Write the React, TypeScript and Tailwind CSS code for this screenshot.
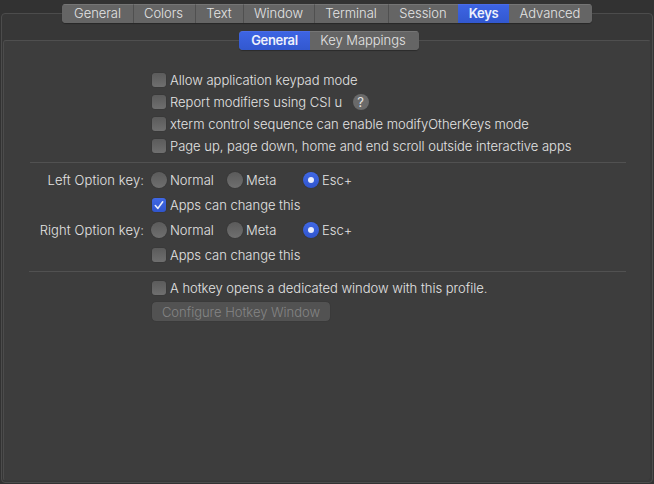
import React from "react";
import { clsx } from "clsx";

type Tab = { label: string; width: string; active?: boolean };

const mainTabs: Tab[] = [
  { label: "General", width: "w-[71px]" },
  { label: "Colors", width: "w-[62px] pr-[2px]" },
  { label: "Text", width: "w-[48px] pr-px" },
  { label: "Window", width: "w-[71px] pr-px" },
  { label: "Terminal", width: "w-[74px] pr-px" },
  { label: "Session", width: "w-[70px] pr-px" },
  { label: "Keys", width: "w-[51px]", active: true },
  { label: "Advanced", width: "w-[83px] pr-px" },
];

const keyTabs: Tab[] = [
  { label: "General", width: "w-[71px]", active: true },
  { label: "Key Mappings", width: "w-[109px] pr-[3px]" },
];

function Segmented({ tabs }: { tabs: Tab[] }) {
  return (
    <div className="flex h-[19px] shrink-0 overflow-hidden rounded-[4px] bg-[#656565] shadow-[0_1px_1px_rgba(0,0,0,0.3)]">
      {tabs.map((tab, i) => (
        <button
          key={tab.label}
          className={clsx(
            "flex h-full shrink-0 items-center justify-center border-t pb-[2px] whitespace-nowrap",
            tab.width,
            tab.active
              ? "border-t-[#4a6ce8] bg-linear-to-b from-[#3d64e3] to-[#3258cf] font-semibold text-[#eef1fc] tracking-[-0.35px]"
              : "border-t-[#757575] bg-[#656565] tracking-[-0.04px]",
            i > 0 && !tab.active && !tabs[i - 1].active && "border-l border-l-[#505050]",
          )}
        >
          {tab.label}
        </button>
      ))}
    </div>
  );
}

function Box({ checked }: { checked?: boolean }) {
  return (
    <span
      className={clsx(
        "flex size-[14px] shrink-0 items-center justify-center rounded-[3px] shadow-[0_0_1px_rgba(0,0,0,0.5)]",
        checked
          ? "bg-linear-to-b from-[#4068e6] to-[#3055cc]"
          : "bg-linear-to-b from-[#5b5b5b] to-[#6f6f6f]",
      )}
    >
      {checked && (
        <svg viewBox="0 0 14 14" className="size-[14px]" fill="none" stroke="#e9eefc" strokeWidth="1.6" strokeLinecap="round" strokeLinejoin="round">
          <path d="M3.3 7.5 5.9 10.4 10.7 3.8" />
        </svg>
      )}
    </span>
  );
}

function Check({ label, checked, children }: { label: string; checked?: boolean; children?: React.ReactNode }) {
  return (
    <div className="ml-[152px] flex h-[22px] items-center">
      <Box checked={checked} />
      <span className="ml-1 whitespace-nowrap">{label}</span>
      {children}
    </div>
  );
}

function Radio({ label, checked }: { label: string; checked?: boolean }) {
  return (
    <div className="flex w-[76px] items-center">
      <span
        className={clsx(
          "flex size-4 shrink-0 items-center justify-center rounded-full shadow-[0_0_1px_rgba(0,0,0,0.5)]",
          checked
            ? "bg-linear-to-b from-[#4068e6] to-[#3055cc]"
            : "bg-linear-to-b from-[#5b5b5b] to-[#6f6f6f]",
        )}
      >
        {checked && <span className="size-[6px] rounded-full bg-[#e9eefc]" />}
      </span>
      <span className="ml-[3px]">{label}</span>
    </div>
  );
}

function OptionKey({ label, checked }: { label: string; checked?: boolean }) {
  return (
    <div className="h-[50px]">
      <div className="flex h-[28px] items-center">
        <span className="w-[144px] pb-px text-right tracking-[0.1px] whitespace-nowrap">{label}</span>
        <div className="ml-[7px] flex">
          <Radio label="Normal" />
          <Radio label="Meta" />
          <Radio label="Esc+" checked />
        </div>
      </div>
      <Check label="Apps can change this" checked={checked} />
    </div>
  );
}

export default function App() {
  return (
    <main className="flex h-[484px] w-[654px] flex-col overflow-hidden bg-[#323232] px-px pt-[13px] pb-px font-['Inter','Liberation_Sans',sans-serif] text-[13px] leading-4 font-[360] tracking-[-0.015px] text-[#e4e4e4]">
      <section className="flex h-[470px] flex-col rounded-[4px] border border-[#4c4c4c] bg-[#373737] px-px pb-px">
        <div className="mt-[-10px] flex pl-[59px]">
          <Segmented tabs={mainTabs} />
        </div>
        <section className="mt-[17px] flex flex-1 flex-col rounded-[3px] border border-t-[#4f4f4f] border-r-[#383838] border-b-[#3a3a3a] border-l-[#4c4c4c] bg-[#3d3d3d]">
          <div className="mt-[-10px] flex pl-[235px]">
            <Segmented tabs={keyTabs} />
          </div>
          <div className="-ml-1 w-[654px] pt-[19px]">
            <Check label="Allow application keypad mode" />
            <Check label="Report modifiers using CSI u">
              <span className="ml-[10.5px] flex size-4 items-center justify-center rounded-full bg-[#6a6a6a] text-[13px] font-normal">?</span>
            </Check>
            <Check label="xterm control sequence can enable modifyOtherKeys mode" />
            <Check label="Page up, page down, home and end scroll outside interactive apps" />
            <hr className="mt-[5px] ml-[30px] w-[596px] border-t border-[#515151]" />
            <div className="pt-[3px]">
              <OptionKey label="Left Option key:" checked />
              <OptionKey label="Right Option key:" />
            </div>
            <hr className="mt-[5px] ml-[29px] w-[597px] border-t border-[#515151]" />
            <div className="pt-[5px]">
              <Check label="A hotkey opens a dedicated window with this profile." />
              <button disabled className="mt-[3px] ml-[152px] flex h-[19px] w-[178px] items-center justify-center rounded-[4px] bg-[#525252] text-[#858585] shadow-[0_0_1px_rgba(0,0,0,0.4)]">
                Configure Hotkey Window
              </button>
            </div>
          </div>
        </section>
      </section>
    </main>
  );
}
